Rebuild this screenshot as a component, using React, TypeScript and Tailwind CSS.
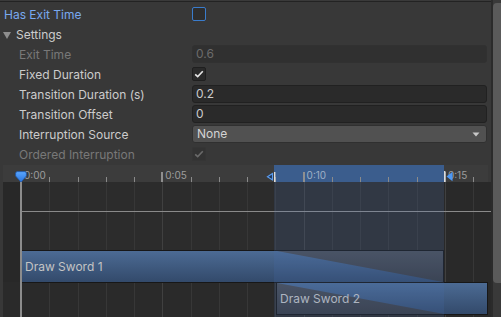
import type { ReactNode } from "react";

const TICK = 28.26;
const ORIGIN = 18;
const tx = (t: number) => ORIGIN + t * TICK;
const TICKS = Array.from({ length: 17 }, (_, i) => i);

function Check({ color }: { color: string }) {
  return (
    <svg width="10" height="8" viewBox="0 0 10 8">
      <path d="M1.2 4.3 L3.7 6.6 L8.8 1.2" stroke={color} strokeWidth="1.6" fill="none" />
    </svg>
  );
}

function Row({
  label,
  tone = "normal",
  indent = true,
  children,
}: {
  label: ReactNode;
  tone?: "normal" | "muted" | "accent";
  indent?: boolean;
  children?: ReactNode;
}) {
  const color =
    tone === "muted" ? "text-[#787878]" : tone === "accent" ? "text-[#79a9ef]" : "text-[#cccccc]";
  return (
    <div className="flex h-5 items-center">
      <div className={`w-[192px] shrink-0 leading-5 ${indent ? "pl-[19px]" : "pl-[4px]"} ${color}`}>
        {label}
      </div>
      <div className="flex flex-1 self-start pr-[4px]">{children}</div>
    </div>
  );
}

function Field({ value, disabled }: { value: string; disabled?: boolean }) {
  return (
    <div
      className={`flex h-[18px] flex-1 items-center rounded-[3px] border px-[3px] leading-4 ${
        disabled
          ? "border-[#313131] bg-[#303030] text-[#6c6c6c]"
          : "border-[#212121] bg-[#2a2a2a] text-[#cccccc]"
      }`}
    >
      {value}
    </div>
  );
}

function Box({ checked, focus, disabled }: { checked?: boolean; focus?: boolean; disabled?: boolean }) {
  return (
    <div
      className={`mt-[2px] flex h-[14px] w-[14px] items-center justify-center rounded-[2px] border ${
        focus
          ? "border-[#3a7ccc] bg-[#2e2e2e]"
          : disabled
            ? "border-[#353535] bg-[#333333]"
            : "border-[#1f1f1f] bg-[#2a2a2a]"
      }`}
    >
      {checked && <Check color={disabled ? "#6a6a6a" : "#e6e6e6"} />}
    </div>
  );
}

function Clip({
  id,
  label,
  left,
  top,
  width,
  fade,
}: {
  id: string;
  label: string;
  left: number;
  top: number;
  width: number;
  fade: string;
}) {
  return (
    <div
      className="absolute flex h-[33px] items-center overflow-hidden border border-[#171717] bg-linear-to-b from-[#4c6b94] to-[#334a6b]"
      style={{ left, top, width }}
    >
      <svg className="absolute inset-0 h-full w-full" viewBox={`0 0 ${width - 2} 31`} preserveAspectRatio="none">
        <defs>
          <linearGradient id={id} x1="0" y1="0" x2="0" y2="1">
            <stop offset="0" stopColor="#4a4e56" />
            <stop offset="1" stopColor="#383b41" />
          </linearGradient>
        </defs>
        <polygon points={fade} fill={`url(#${id})`} />
      </svg>
      <span className="relative pl-[3px] text-[#c4c4c4]">{label}</span>
    </div>
  );
}

function Timeline() {
  return (
    <div className="ml-[3px] flex w-[488px] shrink-0 flex-col">
      {/* ruler */}
      <div className="relative h-[17px] w-[485px] bg-[#3c3c3c] text-[10px] leading-3">
        <div className="absolute top-0 h-[17px] bg-[#3b5d8d]" style={{ left: 271, width: 170 }} />
        {TICKS.map((t) => (
          <div
            key={t}
            className={`absolute bottom-0 ${t % 5 === 0 ? "h-[10px] w-[2px] bg-[#8f8f8f]" : "h-[5px] w-px bg-[#8a8a8a]"}`}
            style={{ left: t % 5 === 0 ? tx(t) - 1 : tx(t) }}
          />
        ))}
        {[0, 5, 10, 15].map((t) => (
          <span
            key={t}
            className={`absolute top-[4px] ${t === 10 ? "text-[#9fb0c6]" : "text-[#9c9c9c]"}`}
            style={{ left: tx(t) + 3 }}
          >
            0:{t < 10 ? `0${t}` : t}
          </span>
        ))}
        {/* transition start marker */}
        <svg className="absolute left-[263px] top-[7px]" width="10" height="10" viewBox="0 0 10 10">
          <path d="M6.5 1.5 L1.5 4.8 L6.5 8 Z" fill="#1e3556" stroke="#5a9cf0" strokeWidth="1.2" />
          <rect x="8" y="0" width="1.4" height="10" fill="#dcdcdc" />
        </svg>
        {/* transition end marker */}
        <svg className="absolute left-[441px] top-[6px]" width="10" height="11" viewBox="0 0 10 11">
          <rect x="0" y="0" width="1.4" height="11" fill="#dcdcdc" />
          <path d="M8.5 0.8 L2.5 5.5 L8.5 10.2 Z" fill="#4d97f2" />
        </svg>
        {/* playhead */}
        <svg className="absolute left-[12px] top-[6px]" width="12" height="12" viewBox="0 0 12 12">
          <defs>
            <linearGradient id="ph" x1="0" y1="0" x2="0" y2="1">
              <stop offset="0" stopColor="#5aa6ff" />
              <stop offset="1" stopColor="#2a74dc" />
            </linearGradient>
          </defs>
          <path d="M0.6 2.4 Q0.6 0.6 2.4 0.6 H9.6 Q11.4 0.6 11.4 2.4 V5 L6 11.2 L0.6 5 Z" fill="url(#ph)" stroke="#1d56a6" strokeWidth="0.8" />
        </svg>
      </div>
      {/* tracks */}
      <div className="relative h-[135px] bg-[#2c2c2c]">
        <div className="absolute bottom-0 left-0 top-0 w-[18px] bg-[#282828]" />
        <div className="absolute bottom-0 right-0 top-0 w-[47px] bg-[#292929]" />
        <div className="absolute bottom-0 left-0 h-[35px] w-[273px] bg-[#2a2a2a]" />
        {TICKS.slice(1).map((t) => (
          <div
            key={t}
            className={`absolute bottom-0 top-0 w-px ${t % 5 === 0 ? "bg-[#404040]" : "bg-[#373737]"}`}
            style={{ left: tx(t) }}
          />
        ))}
        <div className="absolute left-[18px] right-0 top-[29px] h-px bg-[#8a8a8a]" />
        <Clip id="fadeA" label="Draw Sword 1" left={18} top={68} width={423} fade="255,0 421,0 421,31" />
        <Clip id="fadeB" label="Draw Sword 2" left={273} top={100} width={212} fade="0,0 167,31 0,31" />
        <div className="absolute bottom-0 top-0 bg-[rgba(70,110,175,0.18)]" style={{ left: 271, width: 170 }} />
        <div className="absolute bottom-0 left-[17px] top-0 w-[2px] bg-[#8c8c8c]" />
      </div>
    </div>
  );
}

export default function App() {
  return (
    <div className="flex h-[317px] w-[501px] overflow-hidden bg-[#383838] font-['Inter','Liberation_Sans',sans-serif] text-[12px]">
      <div className="flex w-[491px] flex-col">
        <div className="h-px bg-[#3a3a3a]" />
        <div className="h-px bg-[#232323]" />
        <div className="h-[3px]" />
        <Row label="Has Exit Time" tone="accent" indent={false}>
          <Box focus />
        </Row>
        <div className="flex h-5 items-center gap-[5px] pl-[3px] leading-5 text-[#cccccc]">
          <svg width="8" height="7" viewBox="0 0 8 7">
            <path d="M0 0 H8 L4 7 Z" fill="#8e8e8e" />
          </svg>
          Settings
        </div>
        <Row label="Exit Time" tone="muted">
          <Field value="0.6" disabled />
        </Row>
        <Row label="Fixed Duration">
          <Box checked />
        </Row>
        <Row label="Transition Duration (s)">
          <Field value="0.2" />
        </Row>
        <Row label="Transition Offset">
          <Field value="0" />
        </Row>
        <Row label="Interruption Source">
          <div className="flex h-[18px] flex-1 items-center justify-between rounded-[3px] border border-[#303030] bg-[#515151] pl-[4px] pr-[6px] leading-4 text-[#d4d4d4]">
            None
            <svg width="8" height="5" viewBox="0 0 8 5">
              <path d="M0.5 0.5 H7.5 L4 4.5 Z" fill="#c8c8c8" />
            </svg>
          </div>
        </Row>
        <Row label="Ordered Interruption" tone="muted">
          <Box checked disabled />
        </Row>
        <Timeline />
      </div>
      <div className="flex w-[10px] bg-[#2b2b2b] pl-[2px]">
        <div className="flex flex-1 flex-col bg-[#393939]">
          <div className="mt-[3px] h-[280px] rounded-l-[4px] bg-[#5a5a5a]" />
        </div>
      </div>
    </div>
  );
}
